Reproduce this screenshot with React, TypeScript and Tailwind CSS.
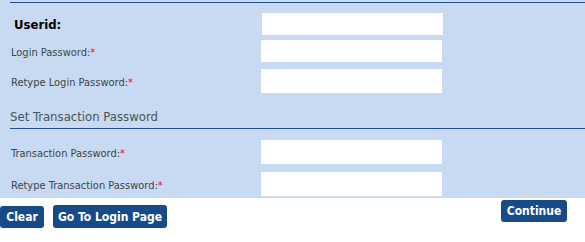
import React from 'react';

const font = { fontFamily: '"DejaVu Sans Condensed", "DejaVu Sans", sans-serif' };

const Field: React.FC<{ label: string; required?: boolean; bold?: boolean; className?: string; h?: string; ml?: string }> = ({
  label,
  required,
  bold,
  className = '',
  h = 'h-[22px]',
  ml = 'ml-[261px]',
}) => (
  <div className={`relative flex items-center ${className}`}>
    <label
      className={`absolute ${bold ? 'left-[14px] text-[13px] font-bold text-black pt-[2px]' : 'left-[11px] text-[11px] text-[#3b4748] pt-[4px]'} whitespace-nowrap`}
    >
      {label}
      {required && <span className="text-[#ee1111]">*</span>}
    </label>
    <input type="text" className={`${ml} ${h} w-[181px] bg-white outline-none`} />
  </div>
);

export default function App() {
  return (
    <div className="w-[585px] h-[242px] bg-white" style={font}>
      <div className="bg-[#c8d9f2] h-[198px] pt-[2px]">
        <div className="ml-[10px] h-px bg-[#1d4e97]" />
        <Field label="Userid:" bold className="mt-[10px]" ml="ml-[262px]" />
        <Field label="Login Password:" required className="mt-[5px]" />
        <Field label="Retype Login Password:" required className="mt-[7px]" h="h-[24px]" />
        <div className="ml-[10px] mt-[16px] text-[13px] leading-[16px] text-[#475557]">Set Transaction Password</div>
        <div className="ml-[10px] mt-[3px] h-px bg-[#1d4e97]" />
        <Field label="Transaction Password:" required className="mt-[11px]" h="h-[24px]" />
        <Field label="Retype Transaction Password:" required className="mt-[8px]" h="h-[24px]" />
      </div>
      <div className="relative flex items-start">
        <button className="mt-[8px] h-[22px] w-[44px] rounded-[3px] bg-[#174a88] text-[12px] font-bold text-white">Clear</button>
        <button className="ml-[9px] mt-[7px] h-[23px] w-[114px] rounded-[3px] bg-[#174a88] text-[12px] font-bold text-white">
          Go To Login Page
        </button>
        <button className="ml-[334px] mt-[2px] h-[22px] w-[66px] rounded-[3px] bg-[#174a88] text-[12px] font-bold text-white">
          Continue
        </button>
      </div>
    </div>
  );
}
